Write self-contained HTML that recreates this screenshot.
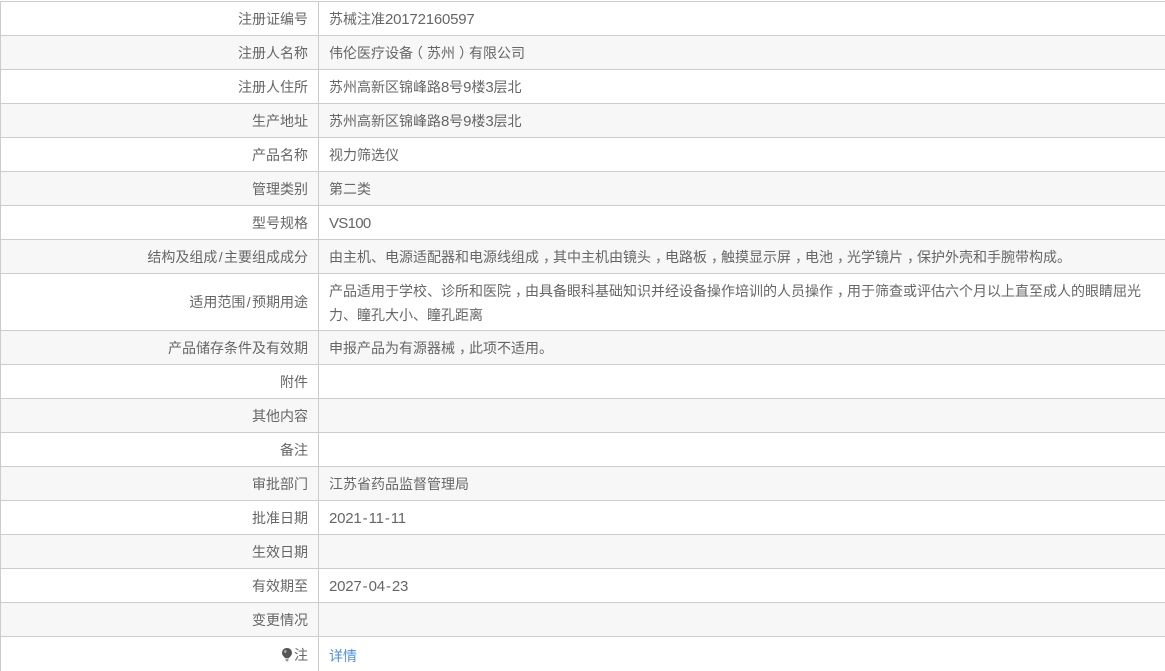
<!DOCTYPE html>
<html><head><meta charset="utf-8">
<style>
html,body{margin:0;padding:0;background:#fff;width:1165px;height:671px;overflow:hidden}
body{position:relative;font-family:"Liberation Sans","Noto Sans CJK SC",sans-serif;font-size:14px;color:#666}
.r{position:absolute;left:0;width:1165px;box-sizing:border-box;border-top:1px solid #ccc}
.r.g{background:#f7f7f7}
.l{position:absolute;left:1px;top:0;bottom:0;width:307px;text-align:right;border-left:1px solid #ccc;margin-left:-1px;line-height:35px}
.v{position:absolute;left:318px;top:0;bottom:0;right:0;border-left:1px solid #ccc;padding-left:10px;line-height:35px}
.m{line-height:24px;padding-top:5px;padding-right:0;width:836px;right:auto}
a{color:#4d90e0;text-decoration:none}
.i{display:inline-block;vertical-align:-2px;margin-right:2px}
i{font-style:normal;position:relative}
.c{left:4px}
.o{left:-4px}
.p{left:4px}
.d{font-size:15px;letter-spacing:-.2px}
.h{padding:0 1.1px}
.s{padding:0 1.4px}
</style></head><body>
<div class="r" style="top:1px;height:34px"><div class="l">注册证编号</div><div class="v">苏械注准<span class="d">20172160597</span></div></div>
<div class="r g" style="top:35px;height:34px"><div class="l">注册人名称</div><div class="v">伟伦医疗设备<i class="o">（</i>苏州<i class="p">）</i>有限公司</div></div>
<div class="r" style="top:69px;height:34px"><div class="l">注册人住所</div><div class="v">苏州高新区锦峰路<span class="d">8</span>号<span class="d">9</span>楼<span class="d">3</span>层北</div></div>
<div class="r g" style="top:103px;height:34px"><div class="l">生产地址</div><div class="v">苏州高新区锦峰路<span class="d">8</span>号<span class="d">9</span>楼<span class="d">3</span>层北</div></div>
<div class="r" style="top:137px;height:34px"><div class="l">产品名称</div><div class="v">视力筛选仪</div></div>
<div class="r g" style="top:171px;height:34px"><div class="l">管理类别</div><div class="v">第二类</div></div>
<div class="r" style="top:205px;height:34px"><div class="l">型号规格</div><div class="v"><span class="d" style="letter-spacing:-.7px">VS100</span></div></div>
<div class="r g" style="top:239px;height:34px"><div class="l">结构及组成<span class="s">/</span>主要组成成分</div><div class="v">由主机、电源适配器和电源线组成<i class="c">，</i>其中主机由镜头<i class="c">，</i>电路板<i class="c">，</i>触摸显示屏<i class="c">，</i>电池<i class="c">，</i>光学镜片<i class="c">，</i>保护外壳和手腕带构成。</div></div>
<div class="r" style="top:273px;height:57px"><div class="l" style="line-height:57px">适用范围<span class="s">/</span>预期用途</div><div class="v m">产品适用于学校、诊所和医院<i class="c">，</i>由具备眼科基础知识并经设备操作培训的人员操作<i class="c">，</i>用于筛查或评估六个月以上直至成人的眼睛屈光力、瞳孔大小、瞳孔距离</div></div>
<div class="r g" style="top:330px;height:34px"><div class="l">产品储存条件及有效期</div><div class="v">申报产品为有源器械<i class="c">，</i>此项不适用。</div></div>
<div class="r" style="top:364px;height:34px"><div class="l">附件</div><div class="v"></div></div>
<div class="r g" style="top:398px;height:34px"><div class="l">其他内容</div><div class="v"></div></div>
<div class="r" style="top:432px;height:34px"><div class="l">备注</div><div class="v"></div></div>
<div class="r g" style="top:466px;height:34px"><div class="l">审批部门</div><div class="v">江苏省药品监督管理局</div></div>
<div class="r" style="top:500px;height:34px"><div class="l">批准日期</div><div class="v"><span class="d">2021<span class="h">-</span>11<span class="h">-</span>11</span></div></div>
<div class="r g" style="top:534px;height:34px"><div class="l">生效日期</div><div class="v"></div></div>
<div class="r" style="top:568px;height:34px"><div class="l">有效期至</div><div class="v"><span class="d">2027<span class="h">-</span>04<span class="h">-</span>23</span></div></div>
<div class="r g" style="top:602px;height:34px"><div class="l">变更情况</div><div class="v"></div></div>
<div class="r" style="top:636px;height:35px"><div class="l" style="line-height:37px"><svg class="i" width="10" height="14" viewBox="0 0 10 14"><path d="M5 0C7.9 0 10 2.1 10 4.9C10 7.4 8 8.6 7 10H3C2 8.6 0 7.4 0 4.9C0 2.1 2.1 0 5 0Z" fill="#555"/><path d="M3.4 10.5H6.6V12L5.6 13.5H4.4L3.4 12Z" fill="#999"/><ellipse cx="3.3" cy="3.5" rx="1.2" ry="1.5" fill="#aaa"/></svg>注</div><div class="v" style="line-height:39px"><a>详情</a></div></div>
</body></html>
